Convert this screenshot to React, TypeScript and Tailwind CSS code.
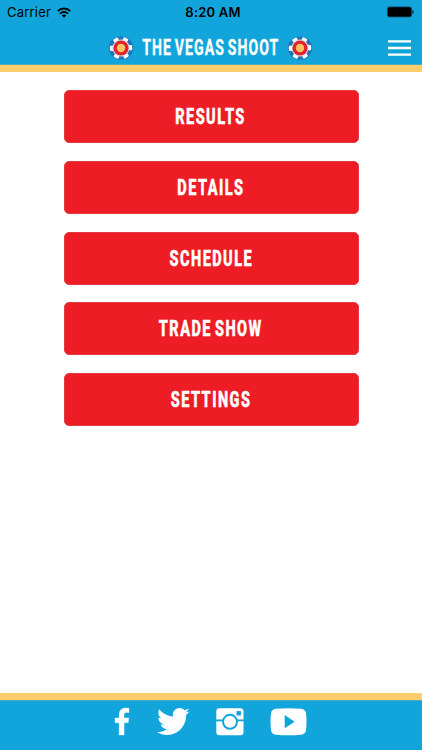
import React from "react";

const spokes = [0, 60, 120, 180, 240, 300];

function Chip() {
  return (
    <svg viewBox="0 0 26 24" className="h-6 w-[26px]" preserveAspectRatio="none">
      <ellipse cx="13" cy="12" rx="12.2" ry="11.6" fill="#2473b8" />
      {spokes.map((a) => (
        <rect key={a} x="10.300" y="0.8" width="5.400" height="3.4" rx="1.2" fill="#f4fbff" transform={`rotate(${a + 28} 13 12)`} />
      ))}
      <circle cx="13" cy="12" r="8.6" fill="#cfe4f4" />
      <circle cx="13" cy="12" r="7.6" fill="#e3222b" />
      <circle cx="13" cy="12" r="4.2" fill="#fdc566" />
    </svg>
  );
}

const items = ["RESULTS", "DETAILS", "SCHEDULE", "TRADE SHOW", "SETTINGS"];

export default function App() {
  return (
    <div className="flex h-[750px] w-[422px] flex-col overflow-hidden bg-white">
      <header className="h-[72px] shrink-0 border-b-[7px] border-[#ffcd6b] bg-[#12a5db] shadow-[inset_0_-1px_0_#4faabd]">
        <div className="grid h-6 grid-cols-3 items-center pl-[7px] pr-[7px] font-['Inter',sans-serif] text-black">
          <div className="flex items-center gap-[6px] pt-px text-[13px] tracking-[0.2px]">
            <span>Carrier</span>
            <svg viewBox="0 0 14 11" className="h-[11px] w-[14px]">
              <g fill="none" stroke="#000" strokeWidth="1.9">
                <path d="M.7 4.1a9 9 0 0 1 12.6 0" />
                <path d="M3 6.6a5.7 5.7 0 0 1 8 0" />
              </g>
              <path d="M4.8 8.5a3.1 3.1 0 0 1 4.4 0L7 10.7z" />
            </svg>
          </div>
          <span className="whitespace-nowrap pl-1 pt-px text-center text-[13px] font-semibold tracking-[0.2px]">8:20 AM</span>
          <svg viewBox="0 0 29 12" className="h-3 w-[29px] justify-self-end">
            <rect x="1.4" y=".9" width="24.2" height="10" rx="2" fill="#000" stroke="#064a63" strokeWidth=".8" />
            <path d="M26.500 4c1.4.3 1.4 3.7 0 4z" />
          </svg>
        </div>
        <div className="flex h-[41px] items-start pl-[108px] pr-[11px]">
          <div className="pt-[12px]"><Chip /></div>
          <div className="ml-[9px] mr-[8px] flex w-[136px] justify-center pt-[12px]">
            <h1 className="shrink-0 scale-x-[0.655] whitespace-nowrap font-['Roboto',sans-serif] text-[21.500px] font-bold leading-6 tracking-[1.6px] text-white [-webkit-text-stroke:0.3px_white] [word-spacing:-2.5px]">THE VEGAS SHOOT</h1>
          </div>
          <div className="pt-[12px]"><Chip /></div>
          <svg viewBox="0 0 23 16" className="ml-auto mt-[15.500px] h-4 w-[23px]" role="img" aria-label="Menu">
            <path d="M0 1.300h23M0 8h23M0 14.700h23" stroke="#fff" strokeWidth="2.300" />
          </svg>
        </div>
      </header>
      <main className="flex flex-1 flex-col items-center gap-[17.8px] pt-[18px]">
        {items.map((label) => (
          <button key={label} className="flex h-[53px] w-[295px] shrink-0 items-center justify-center rounded-[5px] border border-[#e43a43] bg-[#ee1c25] pt-px">
            <span className="scale-x-[0.66] whitespace-nowrap font-['Roboto',sans-serif] text-[22px] font-extrabold leading-6 tracking-[2.2px] text-white [-webkit-text-stroke:0.5px_white] [word-spacing:-3px]">{label}</span>
          </button>
        ))}
      </main>
      <footer className="flex h-[57px] shrink-0 items-start border-t-[7px] border-[#ffcd6b] bg-[#12a5db] pl-[115px] pt-[8px] shadow-[inset_0_1px_0_#4faabd]">
        <svg viewBox="95 0 864 1664" preserveAspectRatio="none" className="h-[27px] w-[14px] overflow-visible" fill="#fff" stroke="#fff" strokeWidth="20">
          <path d="M959 12v264h-157q-86 0-116 36t-30 108v189h293l-39 296h-254v759h-306v-759h-255v-296h255v-218q0-186 104-288.5t277-102.5q147 0 228 12z" />
        </svg>
        <svg viewBox="0 48 512 416" preserveAspectRatio="none" className="ml-[27.5px] h-[27px] w-[32.5px]" fill="#fff">
          <path d="M459.37 151.716c.325 4.548.325 9.097.325 13.645 0 138.72-105.583 298.558-298.558 298.558-59.452 0-114.68-17.219-161.137-47.106 8.447.974 16.568 1.299 25.34 1.299 49.055 0 94.213-16.568 130.274-44.832-46.132-.975-84.792-31.188-98.112-72.772 6.498.974 12.995 1.624 19.818 1.624 9.421 0 18.843-1.3 27.614-3.573-48.081-9.747-84.143-51.98-84.143-102.985v-1.299c13.969 7.797 30.214 12.67 47.431 13.319-28.264-18.843-46.781-51.005-46.781-87.391 0-19.492 5.197-37.36 14.294-52.954 51.655 63.675 129.3 105.258 216.365 109.807-1.624-7.797-2.599-15.918-2.599-24.04 0-57.828 46.782-104.934 104.934-104.934 30.213 0 57.502 12.67 76.67 33.137 23.715-4.548 46.456-13.32 66.599-25.34-7.798 24.366-24.366 44.833-46.132 57.827 21.117-2.273 41.584-8.122 60.426-16.243-14.292 20.791-32.161 39.308-52.628 54.253z" />
        </svg>
        <svg viewBox="0 0 28 28" className="ml-[27px] h-7 w-7">
          <rect x=".3" y=".3" width="27.2" height="27" rx="3.2" fill="#fff" />
          <path d="M0 12.4h28" stroke="#12a5db" strokeWidth="1.8" />
          <circle cx="14" cy="13.8" r="7" fill="#fff" stroke="#12a5db" strokeWidth="2" />
          <rect x="20.5" y="3" width="4.5" height="4.5" rx=".8" fill="#12a5db" />
        </svg>
        <svg viewBox="0 0 37 28" className="ml-[26px] h-7 w-[37px]">
          <path d="M6 .8Q18.500-.4 31 .8Q35.500 1.200 36 5.500Q37 13.700 36 22Q35.500 26.300 31 26.700Q18.500 28 6 26.700Q1.500 26.300 1 22Q0 13.700 1 5.500Q1.500 1.200 6 .8Z" fill="#fff" />
          <path d="M14.700 7v13.300l10-6.650z" fill="#12a5db" />
        </svg>
      </footer>
    </div>
  );
}
